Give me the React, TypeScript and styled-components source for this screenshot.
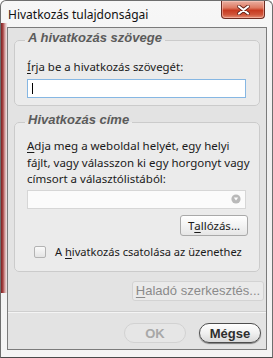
import styled, { createGlobalStyle } from 'styled-components';

const GlobalStyle = createGlobalStyle`
  html, body {
    margin: 0;
    padding: 0;
    background: #ffffff;
  }
  * {
    box-sizing: border-box;
  }
`;

const uiFont = `"Noto Sans", "Open Sans", sans-serif`;
const armFont = `"Liberation Sans", Arial, sans-serif`;

const CloseIcon = () => (
  <svg width='13' height='10' viewBox='0 0 13 10'>
    <path d='M2 1.5 L11 8.5 M11 1.5 L2 8.5' stroke='#5a1c12' strokeWidth='3.6' strokeLinecap='round' />
    <path d='M2 1.5 L11 8.5 M11 1.5 L2 8.5' stroke='#ffffff' strokeWidth='2.2' strokeLinecap='round' />
  </svg>
);

const DropIcon = () => (
  <svg width='10' height='10' viewBox='0 0 10 10'>
    <circle cx='5' cy='5' r='4.6' fill='#b9b9b9' />
    <polygon points='2.8,3.4 7.2,3.4 5,6.6' fill='#ffffff' />
  </svg>
);

const U = styled.span`
  text-decoration: underline;
  text-underline-offset: 2px;
`;

const App = () => {
  return (
    <>
      <GlobalStyle />
      <Window>
        <TitleBar>
          <Title>Hivatkozás tulajdonságai</Title>
          <CloseButton>
            <CloseIcon />
          </CloseButton>
        </TitleBar>
        <Client>
          <Group>
            <Legend>A hivatkozás szövege</Legend>
            <Label>
              <U>Í</U>rja be a hivatkozás szövegét:
            </Label>
            <TextField>
              <Caret />
            </TextField>
          </Group>
          <Group $gap={6}>
            <Legend>Hivatkozás címe</Legend>
            <Paragraph>
              <U>A</U>dja meg a weboldal helyét, egy helyi
              <br />
              fájlt, vagy válasszon ki egy horgonyt vagy
              <br />
              címsort a választólistából:
            </Paragraph>
            <Combo>
              <DropIcon />
            </Combo>
            <BrowseRow>
              <SmallButton>
                T<U>a</U>llózás...
              </SmallButton>
            </BrowseRow>
            <CheckRow>
              <CheckBox />
              <CheckLabel>
                A <U>h</U>ivatkozás csatolása az üzenethez
              </CheckLabel>
            </CheckRow>
          </Group>
          <AdvancedRow>
            <AdvancedButton>
              <U>H</U>aladó szerkesztés...
            </AdvancedButton>
          </AdvancedRow>
          <Separator />
          <Footer>
            <PillButton $disabled>OK</PillButton>
            <PillButton>Mégse</PillButton>
          </Footer>
        </Client>
      </Window>
    </>
  );
};

const Window = styled.div`
  width: 273px;
  height: 358px;
  display: flex;
  flex-direction: column;
  padding: 0 5px 7px 6px;
  border: 1px solid #6e6e6e;
  border-bottom-color: #4a4a4a;
  border-radius: 6px 6px 0 0;
  background:
    linear-gradient(90deg, #7e2222 0, #a84545 2px, #d7a9a9 4px, #f1e9e9 6px, rgba(255, 255, 255, 0) 7px) 0 22px / 7px 270px no-repeat,
    linear-gradient(180deg, #f7f7f7 0, #efefef 40%, #f4f4f4 100%);
`;

const TitleBar = styled.div`
  height: 26px;
  display: flex;
  align-items: flex-start;
  justify-content: space-between;
`;

const Title = styled.div`
  margin-top: 5px;
  padding-left: 1px;
  font-family: ${uiFont};
  font-size: 12px;
  color: #111111;
`;

const CloseButton = styled.div`
  width: 44px;
  height: 18px;
  margin-right: 2px;
  display: flex;
  align-items: center;
  justify-content: center;
  border: 1px solid #6d2c22;
  border-top: none;
  border-radius: 0 0 4px 4px;
  background: linear-gradient(180deg, #eab0a2 0, #de7a62 40%, #c73a20 55%, #d0553a 80%, #e48e74 100%);
  box-shadow: inset 0 0 0 1px rgba(255, 210, 200, 0.5);
`;

const Client = styled.div`
  flex: 1;
  display: flex;
  flex-direction: column;
  border: 1px solid #7b7b7b;
  background: #e3e3e3;
`;

const Group = styled.fieldset<{ $gap?: number }>`
  margin: ${(p) => p.$gap ?? 2}px 6px 0;
  padding: 0 13px 0 12px;
  min-width: 0;
  border: 1px solid #cbcbcb;
  border-radius: 5px;
  background: #ebebeb;
  display: flex;
  flex-direction: column;
`;

const Legend = styled.legend`
  margin-left: -2px;
  padding: 0 3px 5px;
  font-family: ${armFont};
  font-size: 13px;
  font-weight: bold;
  font-style: italic;
  line-height: 15px;
  color: #5b5b5b;
`;

const Label = styled.div`
  margin-top: 9px;
  font-family: ${uiFont};
  font-size: 11.4px;
  line-height: 16px;
  color: #1a1a1a;
  white-space: nowrap;
`;

const TextField = styled.div`
  margin: 4px 0 7px;
  height: 19px;
  border: 1px solid #86b7e3;
  background: #ffffff;
  padding: 3px 4px;
`;

const Caret = styled.div`
  width: 1px;
  height: 11px;
  background: #000000;
`;

const Paragraph = styled.div`
  margin-top: 6px;
  font-family: ${uiFont};
  font-size: 11.5px;
  line-height: 16.5px;
  color: #1a1a1a;
  white-space: nowrap;
`;

const Combo = styled.div`
  margin-top: 2px;
  height: 19px;
  border: 1px solid #d6d6d6;
  background: #fbfbfb;
  display: flex;
  align-items: center;
  justify-content: flex-end;
  padding-right: 4px;
`;

const BrowseRow = styled.div`
  display: flex;
  justify-content: flex-end;
  margin: 6px -2px 0 0;
`;

const SmallButton = styled.div`
  width: 68px;
  height: 21px;
  display: flex;
  align-items: center;
  justify-content: center;
  border: 1px solid #a9a9a9;
  border-radius: 3px;
  background: linear-gradient(180deg, #ffffff 0, #f3f3f3 50%, #e6e6e6 100%);
  font-family: ${uiFont};
  font-size: 11.5px;
  color: #1a1a1a;
`;

const CheckRow = styled.div`
  display: flex;
  align-items: center;
  height: 16px;
  margin: 8px 0 11px 7px;
`;

const CheckBox = styled.div`
  flex: none;
  width: 12px;
  height: 12px;
  border: 1px solid #b3b3b3;
  border-radius: 2px;
  background: linear-gradient(180deg, #fafafa 0, #e4e4e4 100%);
`;

const CheckLabel = styled.span`
  margin-left: 9px;
  font-family: ${uiFont};
  font-size: 11.1px;
  color: #1a1a1a;
  white-space: nowrap;
`;

const AdvancedRow = styled.div`
  display: flex;
  justify-content: flex-end;
  margin: 9px 2px 0 0;
`;

const AdvancedButton = styled.div`
  width: 132px;
  height: 20px;
  display: flex;
  align-items: center;
  justify-content: center;
  border: 1px solid #d3d3d3;
  border-radius: 3px;
  background: #eaeaea;
  font-family: ${armFont};
  font-size: 13px;
  color: #8a8a8a;
`;

const Separator = styled.div`
  margin-top: 10px;
  height: 2px;
  border-top: 1px solid #cfcfcf;
  border-bottom: 1px solid #f4f4f4;
`;

const Footer = styled.div`
  margin-top: auto;
  display: flex;
  justify-content: flex-end;
  gap: 13px;
  padding: 0 5px 6px 0;
`;

const PillButton = styled.div<{ $disabled?: boolean }>`
  width: 62px;
  height: 20px;
  display: flex;
  align-items: center;
  justify-content: center;
  border-radius: 10px;
  border: 1px solid ${(p) => (p.$disabled ? '#d2d2d2' : '#4d4d4d')};
  background: ${(p) =>
    p.$disabled ? '#e6e6e6' : 'linear-gradient(180deg, #ffffff 0, #f0f0f0 50%, #d9d9d9 100%)'};
  box-shadow: ${(p) => (p.$disabled ? 'none' : '0 1px 1px rgba(0, 0, 0, 0.45)')};
  font-family: ${armFont};
  font-size: 13px;
  font-weight: bold;
  color: ${(p) => (p.$disabled ? '#a8a8a8' : '#2e2e2e')};
`;

export default App;
